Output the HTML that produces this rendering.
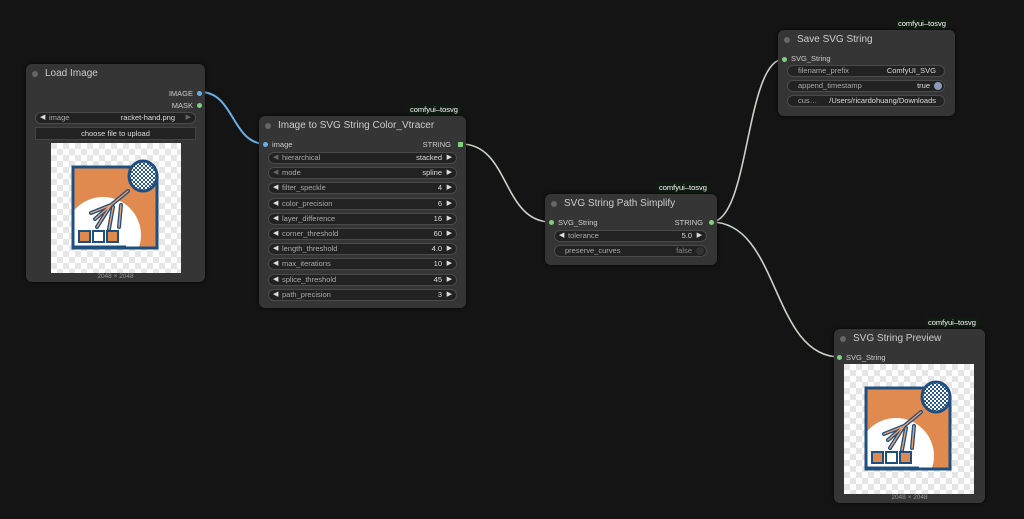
<!DOCTYPE html>
<html><head><meta charset="utf-8"><style>
*{box-sizing:border-box;margin:0;padding:0}
body{width:1024px;height:519px;background:#141414;font-family:"Liberation Sans",sans-serif;position:relative;overflow:hidden;color:#ccc}
.node{position:absolute;background:#353535;border-radius:6px;box-shadow:0 0 4px rgba(0,0,0,.6)}
.title{height:20px;line-height:20px;font-size:10px;color:#ccc;padding-left:19px;position:relative}
.title:before{content:"";position:absolute;left:6px;top:7px;width:6px;height:6px;border-radius:50%;background:#666}
.badge{position:absolute;font-size:7.5px;color:#fff;background:#0f1a10;padding:1px 3px;border-radius:2px}
.w{position:absolute;height:12px;background:#222;border:1px solid #4a4a4a;border-radius:7px;font-size:7.5px;line-height:10px;color:#aaa;padding:0 0 0 13px}
.w.np{padding-left:10px}
.w .v{position:absolute;right:14px;top:0;color:#ddd}
.w .l{position:absolute;left:4px;top:0;font-size:7px;color:#ddd}
.w .r{position:absolute;right:4px;top:0;font-size:7px;color:#ddd}
.lab{position:absolute;font-size:7.5px;color:#ccc}
.dot{position:absolute;width:5px;height:5px;border-radius:50%}
.cap{position:absolute;font-size:6.5px;color:#999}
</style></head><body>
<svg width="0" height="0" style="position:absolute">
<defs>
<pattern id="ck" width="12" height="12" patternUnits="userSpaceOnUse"><rect width="12" height="12" fill="#fff"/><rect width="6" height="6" fill="#e6e6e6"/><rect x="6" y="6" width="6" height="6" fill="#e6e6e6"/></pattern>
<pattern id="net" width="4" height="4" patternUnits="userSpaceOnUse"><rect width="4" height="4" fill="#fff"/><rect width="2" height="2" fill="#2a5a8a"/><rect x="2" y="2" width="2" height="2" fill="#2a5a8a"/></pattern>
<clipPath id="sq"><path d="M22 24H95Q106 24 106 35V105H22Z"/></clipPath>
<symbol id="art" viewBox="0 0 130 130">
<rect width="130" height="130" fill="url(#ck)"/>
<g clip-path="url(#sq)">
<rect x="20" y="20" width="90" height="90" fill="#e08a50"/>
<circle cx="52" cy="92" r="38" fill="#fff"/>
</g>
<path d="M22 24H95Q106 24 106 35V105H22Z" fill="none" stroke="#1f4f7f" stroke-width="3"/>
<line x1="22" y1="104" x2="75" y2="104" stroke="#1f4f7f" stroke-width="3"/>
<path d="M77 48Q65 58 60 62L40 70M60 62L44 76M60 62L46 84M62 64L58 86M70 62L68 84" stroke="#1f4f7f" stroke-width="4" fill="none" stroke-linecap="round"/>
<path d="M77 48Q65 58 60 62L40 70M60 62L44 76M60 62L46 84M62 64L58 86M70 62L68 84" stroke="#e9a070" stroke-width="1.4" fill="none" stroke-linecap="round"/>
<ellipse cx="92" cy="33" rx="14" ry="15" fill="url(#net)" stroke="#1f4f7f" stroke-width="3"/>
<rect x="28" y="88" width="11" height="11" fill="#e08a50" stroke="#1f4f7f" stroke-width="2"/>
<rect x="42" y="88" width="11" height="11" fill="#fff" stroke="#1f4f7f" stroke-width="2"/>
<rect x="56" y="88" width="11" height="11" fill="#e08a50" stroke="#1f4f7f" stroke-width="2"/>
</symbol>
</defs></svg>

<svg width="1024" height="519" style="position:absolute;left:0;top:0">
<path d="M200 92C235 92 231 144 266 144" stroke="#6aaee8" stroke-width="2" fill="none"/>
<path d="M461 144C510 144 502 222 551 222" stroke="#c8d4c4" stroke-width="1.6" fill="none"/>
<path d="M711 222C750 222 745 59 784 59" stroke="#c8d4c4" stroke-width="1.6" fill="none"/>
<path d="M711 222C780 222 771 357 840 357" stroke="#c8d4c4" stroke-width="1.6" fill="none"/>
</svg>

<!-- Load Image -->
<div class="node" style="left:26px;top:64px;width:179px;height:218px">
<div class="title">Load Image</div>
<div class="lab" style="right:12px;top:25px">IMAGE</div><div class="dot" style="right:3px;top:27px;background:#6aaee8"></div>
<div class="lab" style="right:12px;top:37px">MASK</div><div class="dot" style="right:3px;top:39px;background:#7ed07e"></div>
<div class="w" style="left:9px;top:48px;width:161px"><span class="l">◀</span>image<span class="v" style="right:20px">racket-hand.png</span><span class="r" style="color:#666">▶</span></div>
<div style="position:absolute;left:9px;top:63px;width:161px;height:13px;background:#222;border:1px solid #444;font-size:7.5px;color:#ddd;text-align:center;line-height:11px">choose file to upload</div>
<svg style="position:absolute;left:25px;top:79px" width="130" height="130"><use href="#art"/></svg>
<div class="cap" style="left:0;width:179px;text-align:center;top:209px">2048 × 2048</div>
</div>

<!-- Image to SVG -->
<div class="badge" style="left:407px;top:104px">comfyui–tosvg</div>
<div class="node" style="left:259px;top:116px;width:207px;height:192px">
<div class="title">Image to SVG String Color_Vtracer</div>
<div class="dot" style="left:4px;top:26px;background:#6aaee8"></div><div class="lab" style="left:13px;top:24px">image</div>
<div class="lab" style="right:15px;top:24px">STRING</div><div style="position:absolute;right:3px;top:26px;width:5px;height:5px;background:#7ed07e"></div>
<div id="wl"></div>
</div>

<!-- Path Simplify -->
<div class="badge" style="left:656px;top:182px">comfyui–tosvg</div>
<div class="node" style="left:545px;top:194px;width:172px;height:71px">
<div class="title">SVG String Path Simplify</div>
<div class="dot" style="left:4px;top:26px;background:#7ed07e"></div><div class="lab" style="left:13px;top:24px">SVG_String</div>
<div class="lab" style="right:14px;top:24px">STRING</div><div class="dot" style="right:3px;top:26px;background:#7ed07e"></div>
<div class="w" style="left:9px;top:36px;width:153px"><span class="l">◀</span>tolerance<span class="v">5.0</span><span class="r">▶</span></div>
<div class="w np" style="left:9px;top:51px;width:153px">preserve_curves<span class="v" style="color:#888">false</span><span style="position:absolute;right:2px;top:1px;width:8px;height:8px;border-radius:50%;background:#333"></span></div>
</div>

<!-- Save SVG -->
<div class="badge" style="left:895px;top:18px">comfyui–tosvg</div>
<div class="node" style="left:778px;top:30px;width:177px;height:86px">
<div class="title">Save SVG String</div>
<div class="dot" style="left:4px;top:27px;background:#7ed07e"></div><div class="lab" style="left:13px;top:24px">SVG_String</div>
<div class="w np" style="left:9px;top:35px;width:158px">filename_prefix<span class="v" style="right:8px">ComfyUI_SVG</span></div>
<div class="w np" style="left:9px;top:50px;width:158px">append_timestamp<span class="v" style="right:14px">true</span><span style="position:absolute;right:2px;top:1px;width:8px;height:8px;border-radius:50%;background:#8a9ab8"></span></div>
<div class="w np" style="left:9px;top:65px;width:158px">cus…<span class="v" style="right:8px">/Users/ricardohuang/Downloads</span></div>
</div>

<!-- Preview -->
<div class="badge" style="left:925px;top:317px">comfyui–tosvg</div>
<div class="node" style="left:834px;top:329px;width:151px;height:174px">
<div class="title">SVG String Preview</div>
<div class="dot" style="left:3px;top:26px;background:#7ed07e"></div><div class="lab" style="left:12px;top:24px">SVG_String</div>
<svg style="position:absolute;left:10px;top:35px" width="130" height="130"><use href="#art"/></svg>
<div class="cap" style="left:0;width:151px;text-align:center;top:165px">2048 × 2048</div>
</div>

<script>
var rows=[["hierarchical","stacked",1],["mode","spline",1],["filter_speckle","4"],["color_precision","6"],["layer_difference","16"],["corner_threshold","60"],["length_threshold","4.0"],["max_iterations","10"],["splice_threshold","45"],["path_precision","3"]];
var h="";rows.forEach(function(r,i){h+='<div class="w" style="left:9px;top:'+(36+i*15.2)+'px;width:189px"><span class="l"'+(r[2]?' style="color:#666"':'')+'>◀</span>'+r[0]+'<span class="v">'+r[1]+'</span><span class="r">▶</span></div>';});
document.getElementById("wl").outerHTML=h;
</script>
</body></html>
